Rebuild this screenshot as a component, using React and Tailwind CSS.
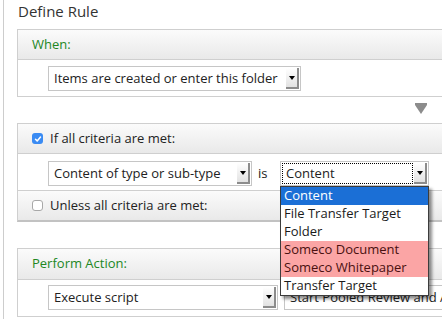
import React from "react";

function Arrow() {
  return (
    <div className="my-px mr-px flex w-[13px] shrink-0 items-center justify-center border-r-2 border-b-2 border-[#8c8c8c] bg-gradient-to-b from-white to-[#e2e2e2]">
      <div className="h-0 w-0 border-x-[3px] border-t-[4px] border-x-transparent border-t-black" />
    </div>
  );
}

function Select({ width, text, focus }) {
  return (
    <div className={`flex h-[25px] shrink-0 items-stretch border border-[#c6c6c6] bg-white ${width}`}>
      <div className="flex min-w-0 flex-1 items-center overflow-hidden p-px">
        <div
          className={`flex h-full flex-1 items-center whitespace-nowrap pl-[4px] ${
            focus ? "outline-1 outline-dotted outline-black -outline-offset-1" : ""
          }`}
        >
          {text}
        </div>
      </div>
      <Arrow />
    </div>
  );
}

function Checkbox({ checked }) {
  if (checked) {
    return (
      <div className="flex h-[11px] w-[11px] items-center justify-center rounded-[3px] bg-[#3a8bf3]">
        <svg width="8" height="8" viewBox="0 0 8 8">
          <path d="M1.5 4.2 L3.2 5.9 L6.5 2" fill="none" stroke="white" strokeWidth="1.5" strokeLinecap="round" strokeLinejoin="round" />
        </svg>
      </div>
    );
  }
  return <div className="h-[11px] w-[11px] rounded-[3px] border border-[#a8a8a8] bg-white" />;
}

function Header({ children, tall }) {
  return (
    <div
      className={`flex items-center gap-[7px] border-b border-[#cfcfcf] bg-gradient-to-b from-[#fbfbfb] to-[#e9e9e9] pl-[14px] ${
        tall ? "h-[31px]" : "h-[30px]"
      }`}
    >
      {children}
    </div>
  );
}

function Spacer() {
  return (
    <div className="h-[26px] pl-[398px] pt-[6px]">
      <svg width="12" height="11" viewBox="0 0 12 11">
        <polygon points="0,0 12,0 12,2 6,11 0,2" fill="#8c8c8c" />
      </svg>
    </div>
  );
}

const options = [
  { label: "Content", tone: "sel" },
  { label: "File Transfer Target" },
  { label: "Folder" },
  { label: "Someco Document", tone: "pink" },
  { label: "Someco Whitepaper", tone: "pink" },
  { label: "Transfer Target" },
];

export default function App() {
  return (
    <div className="relative flex h-[319px] w-[442px] overflow-hidden bg-white font-['Open_Sans',sans-serif] text-[13px] text-[#222]">
      <div className="ml-[3px] w-px shrink-0 bg-[#cdcdcd]" />

      <div className="w-[460px] shrink-0 pl-[13px]">
        <div className="h-[29px] pl-px pt-px text-[15px] leading-5 text-[#333]">Define Rule</div>

        <div className="w-[440px] border border-[#cfcfcf]">
          <Header>
            <span className="text-[#22871f]">When:</span>
          </Header>
          <div className="pl-[30px] pt-[6px] pb-[5px]">
            <Select width="w-[253px]" text="Items are created or enter this folder" />
          </div>
        </div>

        <Spacer />

        <div className="w-[440px] border-x border-t border-[#cfcfcf] border-b-2 border-b-[#c2c2c2]">
          <Header>
            <Checkbox checked />
            <span>If all criteria are met:</span>
          </Header>
          <div className="flex items-center border-b border-[#cfcfcf] pl-[30px] pt-[7px] pb-[4px]">
            <Select width="w-[204px]" text="Content of type or sub-type" />
            <span className="ml-[6px] w-[22px]">is</span>
            <Select width="w-[149px]" text="Content" focus />
          </div>
          <div className="flex h-[29px] items-center gap-[7px] bg-gradient-to-b from-[#fbfbfb] to-[#e9e9e9] pl-[14px]">
            <Checkbox />
            <span>Unless all criteria are met:</span>
          </div>
        </div>

        <Spacer />

        <div className="w-[440px] border border-[#cfcfcf]">
          <Header tall>
            <span className="text-[#22871f]">Perform Action:</span>
          </Header>
          <div className="flex items-center gap-[6px] pl-[30px] pt-[5px] pb-[6px]">
            <Select width="w-[230px]" text="Execute script" />
            <Select width="w-[200px]" text="Start Pooled Review and Approve" />
          </div>
        </div>
      </div>

      <div className="absolute left-[280px] top-[186px] w-[149px] border border-[#3c3c3c] bg-white shadow-[3px_3px_3px_rgba(0,0,0,0.45)]">
        {options.map((o) => (
          <div
            key={o.label}
            className={`flex h-[18px] items-center pl-[3px] whitespace-nowrap ${
              o.tone === "sel"
                ? "bg-[#1b6fd6] text-white"
                : o.tone === "pink"
                ? "bg-[#fba5a5] text-[#4a1010]"
                : "text-[#1a1a1a]"
            }`}
          >
            {o.label}
          </div>
        ))}
      </div>
    </div>
  );
}
